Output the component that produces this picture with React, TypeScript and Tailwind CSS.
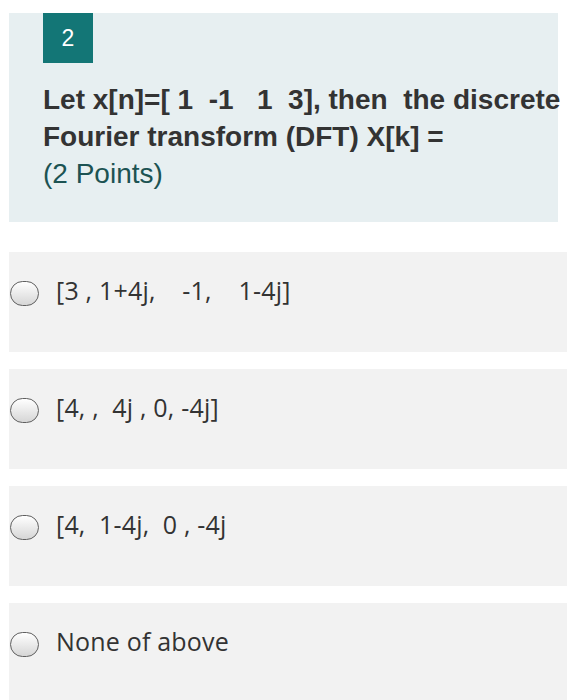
const options = [
  "[3 , 1+4j,    -1,    1-4j]",
  "[4, ,  4j , 0, -4j]",
  "[4,  1-4j,  0 , -4j",
  "None of above",
];

function Radio() {
  return (
    <span className="block h-[25px] w-[29px] shrink-0 rounded-full border-[1.5px] border-[#5f5f5f] bg-linear-to-b from-white to-[#d6d6d6]" />
  );
}

export default function App() {
  return (
    <div className="min-h-screen overflow-hidden bg-white pt-[13px]">
      <section className="ml-[9px] w-[549px] bg-[#e7eff1] pb-[30px] pl-[34px] font-['Liberation_Sans',Arial,sans-serif]">
        <div className="flex h-[50px] w-[50px] items-center justify-center bg-[#137676] text-[23px] text-white">
          2
        </div>
        <h2 className="mt-[18px] whitespace-pre text-[28px] font-bold leading-[37px] text-[#333333]">
          {"Let x[n]=[ 1  -1   1  3], then  the discrete\nFourier transform (DFT) X[k] ="}
        </h2>
        <p className="text-[28px] leading-[37px] text-[#1c5353]">(2 Points)</p>
      </section>

      <div className="mt-[30px] flex flex-col gap-[17px] pl-[9px] font-['Open_Sans','Noto_Sans',sans-serif]">
        {options.map((opt) => (
          <label
            key={opt}
            className="flex h-[100px] items-start gap-[17px] bg-[#f2f2f2] pt-[28px] pl-[1px]"
          >
            <span className="pt-[1px]">
              <Radio />
            </span>
            <span className="-mt-[7px] whitespace-pre text-[25px] leading-[34px] tracking-[0.2px] text-[#333333]">
              {opt}
            </span>
          </label>
        ))}
      </div>
    </div>
  );
}
